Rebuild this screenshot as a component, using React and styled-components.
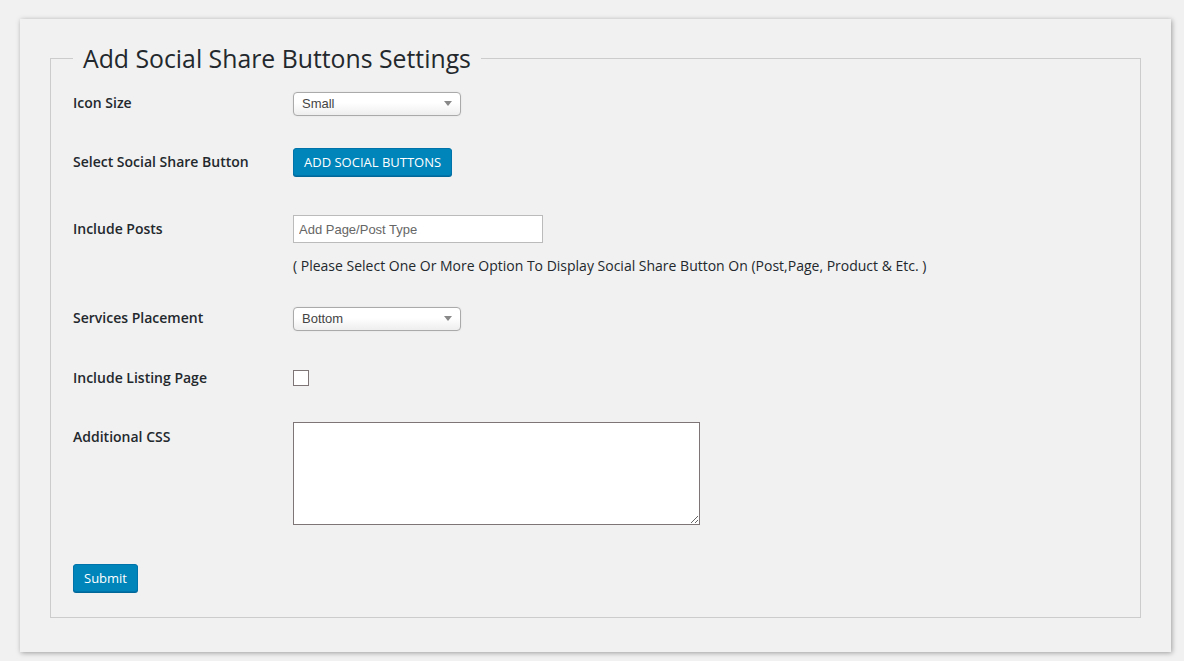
import React from 'react'
import styled, { createGlobalStyle } from 'styled-components'

const GlobalStyle = createGlobalStyle`
  html, body {
    margin: 0;
    padding: 0;
    background: #f1f1f1;
  }
  body {
    font-family: "Open Sans", "Liberation Sans", sans-serif;
    color: #23282d;
  }
`

const Page = styled.div`
  padding: 19px 13px 9px 20px;
  min-height: 661px;
  box-sizing: border-box;
`

const Panel = styled.div`
  background: #f1f1f1;
  box-shadow: 1px 1px 5px rgba(0, 0, 0, 0.35);
  padding: 22px 30px 34px;
`

const Fieldset = styled.fieldset`
  margin: 0;
  border: 1px solid #cccccc;
  padding: 16px 22px 25px;
  min-width: 0;
`

const Legend = styled.legend`
  font-size: 24.8px;
  line-height: 34px;
  font-weight: 400;
  padding: 0 10px;
  color: #23282d;
`

const Row = styled.div`
  display: grid;
  grid-template-columns: 220px 1fr;
  align-items: start;
  margin-top: ${props => props.gap}px;
`

const Label = styled.div`
  font-size: 14px;
  font-weight: 600;
  line-height: ${props => props.lh || 24}px;
  color: #23282d;
`

const Field = styled.div`
  display: flex;
  flex-direction: column;
  align-items: flex-start;
`

const SelectWrap = styled.div`
  position: relative;
  width: 168px;
  height: 24px;

  &::after {
    content: '';
    position: absolute;
    right: 9px;
    top: 10px;
    border-left: 4px solid transparent;
    border-right: 4px solid transparent;
    border-top: 5px solid #888888;
    pointer-events: none;
  }
`

const Select = styled.select`
  appearance: none;
  -webkit-appearance: none;
  width: 100%;
  height: 100%;
  box-sizing: border-box;
  border: 1px solid #aaaaaa;
  border-radius: 4px;
  background: linear-gradient(#ffffff 0%, #ffffff 45%, #eeeeee 100%);
  box-shadow: 0 0 2px rgba(0, 0, 0, 0.08);
  font-family: "Liberation Sans", Arial, sans-serif;
  font-size: 13px;
  color: #444444;
  padding: 0 8px;
  outline: none;
`

const Button = styled.button`
  height: 28px;
  box-sizing: border-box;
  padding: 0 10px;
  background: #0085ba;
  border: 1px solid #0073aa;
  border-radius: 3px;
  box-shadow: 0 1px 0 #006799;
  color: #ffffff;
  font-family: "Open Sans", "Liberation Sans", sans-serif;
  font-size: 13px;
  text-transform: ${props => (props.upper ? 'uppercase' : 'none')};
  cursor: pointer;
`

const TextInput = styled.input`
  width: 250px;
  height: 28px;
  box-sizing: border-box;
  border: 1px solid #bbbbbb;
  background: #ffffff;
  padding: 0 5px;
  font-family: "Liberation Sans", Arial, sans-serif;
  font-size: 13px;
  color: #333333;
  outline: none;

  &::placeholder {
    color: #666666;
  }
`

const Help = styled.p`
  margin: 13px 0 0;
  font-size: 14px;
  line-height: 20px;
  color: #23282d;
`

const Checkbox = styled.input`
  appearance: none;
  -webkit-appearance: none;
  margin: 0;
  width: 16px;
  height: 16px;
  box-sizing: border-box;
  border: 1px solid #7e7676;
  background: #ffffff;
`

const TextArea = styled.textarea`
  width: 407px;
  height: 103px;
  box-sizing: border-box;
  border: 1px solid #7e7676;
  background: #ffffff;
  margin: 0;
  outline: none;
  font-family: "Liberation Mono", monospace;
`

const Actions = styled.div`
  margin-top: 39px;
`

const App = () => {
  return (
    <Page>
      <GlobalStyle />
      <Panel>
        <Fieldset>
          <Legend>Add Social Share Buttons Settings</Legend>

          <Row gap={0}>
            <Label lh={24}>Icon Size</Label>
            <SelectWrap>
              <Select defaultValue="small">
                <option value="small">Small</option>
                <option value="medium">Medium</option>
                <option value="large">Large</option>
              </Select>
            </SelectWrap>
          </Row>

          <Row gap={33}>
            <Label lh={28}>Select Social Share Button</Label>
            <Field>
              <Button upper>Add Social Buttons</Button>
            </Field>
          </Row>

          <Row gap={39}>
            <Label lh={28}>Include Posts</Label>
            <Field>
              <TextInput placeholder="Add Page/Post Type" />
              <Help>( Please Select One Or More Option To Display Social Share Button On (Post,Page, Product &amp; Etc. )</Help>
            </Field>
          </Row>

          <Row gap={30}>
            <Label lh={24}>Services Placement</Label>
            <SelectWrap>
              <Select defaultValue="bottom">
                <option value="top">Top</option>
                <option value="bottom">Bottom</option>
              </Select>
            </SelectWrap>
          </Row>

          <Row gap={40}>
            <Label lh={16}>Include Listing Page</Label>
            <Field>
              <Checkbox type="checkbox" />
            </Field>
          </Row>

          <Row gap={36}>
            <Label lh={30}>Additional CSS</Label>
            <Field>
              <TextArea />
            </Field>
          </Row>

          <Actions>
            <Button>Submit</Button>
          </Actions>
        </Fieldset>
      </Panel>
    </Page>
  )
}

export default App
